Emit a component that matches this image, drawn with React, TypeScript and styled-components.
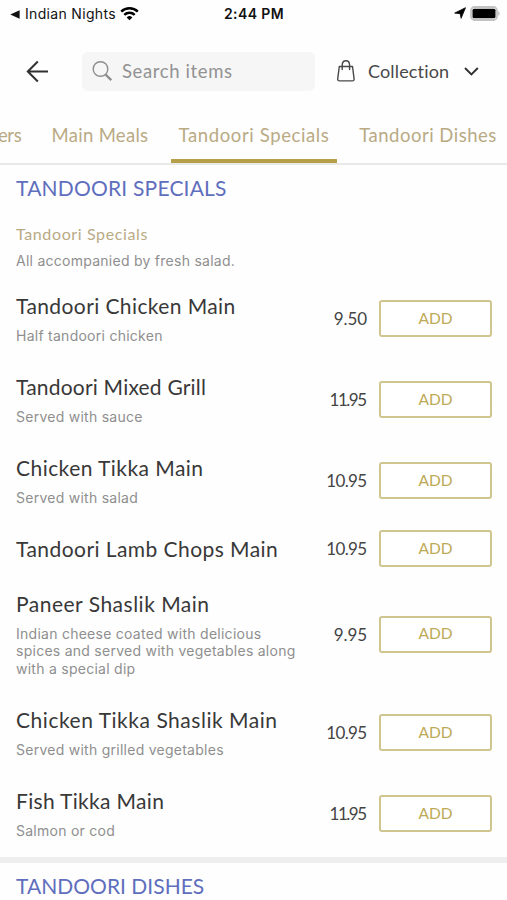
import React from "react";
import styled, { createGlobalStyle } from "styled-components";

const Global = createGlobalStyle`
  *, *::before, *::after { box-sizing: border-box; }
  body { margin: 0; background: #fff; font-family: Lato, "Open Sans", sans-serif; }
  svg { display: block; flex: none; }
`;

const Screen = styled.div`
  width: 507px;
  height: 900px;
  overflow: hidden;
  background: #fefefe;
  color: #383838;
`;

const StatusBar = styled.div`
  display: grid;
  grid-template-columns: 1fr auto 1fr;
  align-items: center;
  height: 28px;
  padding: 0 7px 0 10px;
  font-family: Inter, sans-serif;
  font-size: 14px;
  line-height: 28px;
  color: #111;
`;

const StatusLeft = styled.div`
  display: flex;
  align-items: center;
  letter-spacing: 0.32px;
`;

const AppName = styled.span`
  margin: 0 4px 0 5px;
`;

const Clock = styled.div`
  margin-right: 2px;
  font-weight: 600;
  font-size: 14px;
  letter-spacing: 0.4px;
`;

const StatusRight = styled.div`
  display: flex;
  align-items: center;
  justify-content: flex-end;
  gap: 4px;
  padding-bottom: 2px;
`;

const Header = styled.header`
  display: flex;
  align-items: center;
  height: 86px;
  padding-left: 25px;
`;

const SearchBox = styled.div`
  display: flex;
  align-items: center;
  gap: 9px;
  width: 233px;
  height: 39px;
  margin-left: 32px;
  padding-left: 10px;
  border-radius: 6px;
  background: #f6f6f6;
  color: #929292;
  font-size: 18.5px;
  letter-spacing: 0.62px;
`;

const Collection = styled.div`
  display: flex;
  align-items: center;
  margin-left: 21px;
  font-size: 18px;
  letter-spacing: 0.16px;
  color: #484848;
`;

const CollectionText = styled.span`
  width: 82px;
  margin: 0 14px 0 12px;
  white-space: nowrap;
`;

const Tabs = styled.nav`
  display: flex;
  height: 51px;
  margin-left: -2px;
  border-bottom: 2px solid #e9e9e9;
`;

const Tab = styled.div<{ $width: number; $active?: boolean; $spacing?: number; $align?: string }>`
  flex: none;
  width: ${(p) => p.$width}px;
  height: 49px;
  padding-top: 9px;
  border-bottom: ${(p) => (p.$active ? "4px solid #b59f49" : "4px solid transparent")};
  text-align: ${(p) => p.$align ?? "center"};
  white-space: nowrap;
  font-size: 18.5px;
  line-height: 25px;
  letter-spacing: ${(p) => p.$spacing ?? 0.3}px;
  color: #b9aa84;
`;

const SectionTitle = styled.h2<{ $spacing: number }>`
  margin: 0;
  padding: 8px 16px 1px;
  font-size: 21px;
  font-weight: 400;
  line-height: 30px;
  letter-spacing: ${(p) => p.$spacing}px;
  color: #5f6ebd;
`;

const Intro = styled.div`
  height: 74px;
  padding: 19px 16px 0;
`;

const IntroTitle = styled.div`
  font-size: 16px;
  line-height: 22px;
  letter-spacing: 0.62px;
  color: #b9aa84;
`;

const Description = styled.div`
  font-family: Inter, sans-serif;
  font-size: 14px;
  line-height: 17.5px;
  letter-spacing: 0.26px;
  color: #8f8f8f;
  white-space: pre-line;
`;

const IntroText = styled(Description)`
  margin-top: 7px;
`;

const Row = styled.div`
  display: flex;
  align-items: center;
  padding: 0 15px 0 16px;
`;

const Details = styled.div`
  flex: 1;
  padding: 15px 0 14px;
`;

const Name = styled.div<{ $spacing: number }>`
  font-size: 21px;
  line-height: 26px;
  letter-spacing: ${(p) => p.$spacing}px;
  white-space: nowrap;
`;

const ItemText = styled(Description)`
  margin: 7.5px 0 1px;
`;

const Price = styled.div<{ $spacing: number }>`
  width: 60px;
  margin-right: ${(p) => 12 - p.$spacing}px;
  text-align: right;
  font-size: 17px;
  letter-spacing: ${(p) => p.$spacing}px;
  color: #444;
`;

const AddButton = styled.button`
  width: 113px;
  height: 37px;
  padding: 0 0 2px;
  border: 2px solid #d0c58f;
  border-radius: 3px;
  background: #fff;
  font-family: inherit;
  font-size: 15.5px;
  line-height: 20px;
  color: #bda956;
`;

const Divider = styled.div`
  height: 6px;
  margin-top: 3px;
  background: #eee;
`;

const items = [
  { name: "Tandoori Chicken Main", price: "9.50", text: "Half tandoori chicken", spacing: 0.4 },
  { name: "Tandoori Mixed Grill", price: "11.95", text: "Served with sauce", spacing: 0.2 },
  { name: "Chicken Tikka Main", price: "10.95", text: "Served with salad", spacing: 0.45 },
  { name: "Tandoori Lamb Chops Main", price: "10.95", text: "", spacing: 0.44 },
  {
    name: "Paneer Shaslik Main",
    price: "9.95",
    text: "Indian cheese coated with delicious\nspices and served with vegetables along\nwith a special dip",
    spacing: 0.5,
  },
  { name: "Chicken Tikka Shaslik Main", price: "10.95", text: "Served with grilled vegetables", spacing: 0.53 },
  { name: "Fish Tikka Main", price: "11.95", text: "Salmon or cod", spacing: 0.33 },
];

const priceSpacing: Record<string, number> = { "11.95": -1.5, "10.95": -0.7 };

const BackTriangle = () => (
  <svg width="10" height="9" viewBox="0 0 10 9">
    <path d="M9.6.3v8.4L.3 4.5z" fill="#111" />
  </svg>
);

const Wifi = () => (
  <svg width="19" height="15" viewBox="0 0 19 15">
    <g fill="none" stroke="#000" strokeWidth="2.4">
      <path d="M1.2 4.700a11.8 11.8 0 0 1 16.6 0" />
      <path d="M4.3 7.900a7.4 7.4 0 0 1 10.4 0" />
    </g>
    <path d="M9.5 13.2 6.7 10.400a4 4 0 0 1 5.6 0z" />
  </svg>
);

const LocationArrow = () => (
  <svg width="12" height="12" viewBox="0 0 12 12">
    <path d="M11.5.7 7.1 11.3 6.2 6.7.7 6.100z" stroke="#000" strokeWidth=".8" strokeLinejoin="round" />
  </svg>
);

const Battery = () => (
  <svg width="30" height="15" viewBox="0 0 30 15">
    <rect x="1" y="1" width="26" height="13" rx="3.500" fill="#fff" stroke="#c2c2c2" strokeWidth="1.800" />
    <rect x="2.500" y="2.800" width="23" height="9.400" rx="1.500" />
    <path d="M28.300 5.200c1.800.7 1.800 4 0 4.700z" fill="#b9b9b9" />
  </svg>
);

const BackArrow = () => (
  <svg width="25" height="24" viewBox="0 0 25 24" fill="none" stroke="#303030" strokeWidth="2">
    <path d="M12.800 2.500 2.800 12.500l10 10M2.800 12.500H23" />
  </svg>
);

const SearchIcon = () => (
  <svg width="21" height="22" viewBox="0 0 21 22" fill="none" stroke="#8e8e8e">
    <circle cx="8.500" cy="9" r="7.300" strokeWidth="1.400" />
    <path d="m13.600 14.600 5.700 5.500" strokeWidth="2.300" />
  </svg>
);

const Bag = () => (
  <svg width="20" height="23" viewBox="0 0 20 23" fill="none" stroke="#484848" strokeWidth="1.400" strokeLinecap="round" strokeLinejoin="round">
    <path d="M3.300 6.500h13.200l1.600 12.400q.1 2-1.700 2H3.400q-1.800 0-1.700-2z" />
    <path d="M6.200 9.500V5.400C6.200 2 7.700.8 9.900.8s3.700 1.200 3.700 4.600v4.100" />
  </svg>
);

const Chevron = () => (
  <svg width="15" height="9" viewBox="0 0 15 9" fill="none" stroke="#303030" strokeWidth="1.900">
    <path d="m1 1 6.400 6.400L13.800 1" />
  </svg>
);

export default function App() {
  return (
    <>
      <Global />
      <Screen>
        <StatusBar>
          <StatusLeft>
            <BackTriangle />
            <AppName>Indian Nights</AppName>
            <Wifi />
          </StatusLeft>
          <Clock>2:44 PM</Clock>
          <StatusRight>
            <LocationArrow />
            <Battery />
          </StatusRight>
        </StatusBar>
        <Header>
          <BackArrow />
          <SearchBox>
            <SearchIcon />
            Search items
          </SearchBox>
          <Collection>
            <Bag />
            <CollectionText>Collection</CollectionText>
            <Chevron />
          </Collection>
        </Header>
        <Tabs>
          <Tab $width={39} $align="left" $spacing={-0.4}>ers</Tab>
          <Tab $width={126}>Main Meals</Tab>
          <Tab $width={8} />
          <Tab $width={166} $active $spacing={0.62}>Tandoori Specials</Tab>
          <Tab $width={8} />
          <Tab $width={166} $spacing={0.5}>Tandoori Dishes</Tab>
        </Tabs>
        <SectionTitle $spacing={0.2}>TANDOORI SPECIALS</SectionTitle>
        <Intro>
          <IntroTitle>Tandoori Specials</IntroTitle>
          <IntroText>All accompanied by fresh salad.</IntroText>
        </Intro>
        {items.map((item) => (
          <Row key={item.name}>
            <Details>
              <Name $spacing={item.spacing}>{item.name}</Name>
              {item.text && <ItemText>{item.text}</ItemText>}
            </Details>
            <Price $spacing={priceSpacing[item.price] ?? -0.1}>{item.price}</Price>
            <AddButton>ADD</AddButton>
          </Row>
        ))}
        <Divider />
        <SectionTitle $spacing={0.02}>TANDOORI DISHES</SectionTitle>
      </Screen>
    </>
  );
}
